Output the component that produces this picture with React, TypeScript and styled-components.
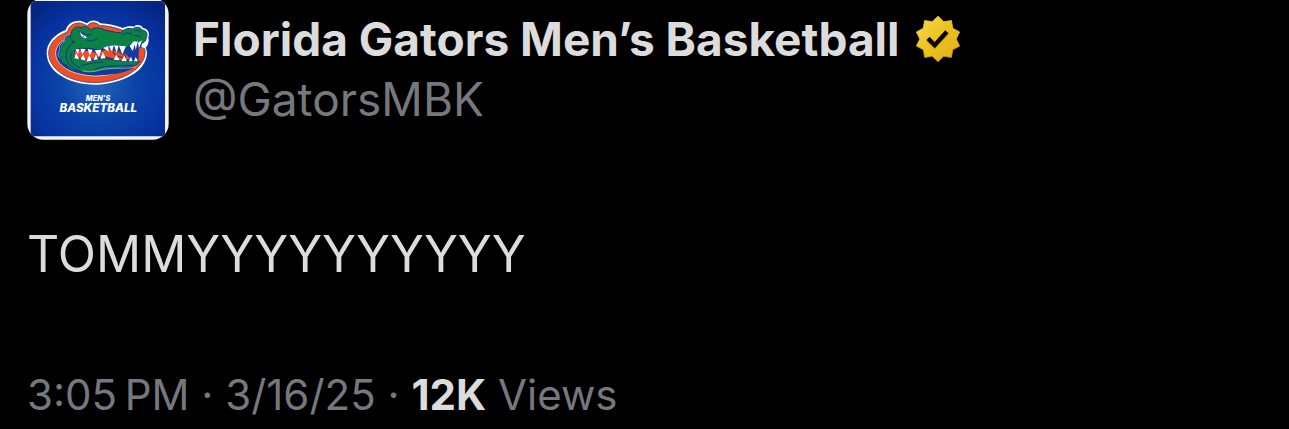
import React from 'react';
import styled, { createGlobalStyle } from 'styled-components';

const GlobalStyle = createGlobalStyle`
  * {
    box-sizing: border-box;
  }

  body {
    margin: 0;
    background: #000;
    color: #dcdcdc;
    font-family: Inter, 'Liberation Sans', sans-serif;
  }
`;

const Post = styled.article`
  padding: 0 27px 8px;
`;

const Header = styled.header`
  display: flex;
  align-items: flex-start;
  gap: 24px;
`;

const AvatarImage = styled.svg`
  display: block;
  flex: none;
  width: 142px;
  height: 140px;
`;

const Author = styled.div`
  min-width: 0;
  padding-top: 9px;
`;

const NameRow = styled.div`
  display: flex;
  align-items: center;
  gap: 16px;
`;

const Name = styled.h1`
  margin: 0;
  font-size: 46px;
  font-weight: 700;
  line-height: 60px;
`;

const Badge = styled.svg`
  display: block;
  flex: none;
  width: 44px;
  height: 46px;
`;

const Handle = styled.p`
  margin: 0;
  color: #75787d;
  font-size: 46px;
  line-height: 60px;
`;

const Body = styled.p`
  margin: 84px 0;
  font-size: 50px;
  line-height: 60px;
  overflow-wrap: anywhere;
`;

const Meta = styled.p`
  margin: 0;
  color: #75787d;
  font-size: 42px;
  line-height: 54px;
`;

const Count = styled.strong`
  color: #dcdcdc;
  font-weight: 700;
`;

function Avatar() {
  return (
    <AvatarImage viewBox="21 0 426 420" role="img" aria-label="Florida Gators Men's Basketball logo">
      <defs>
        <radialGradient id="court" cx="0.5" cy="0.6" r="0.7">
          <stop offset="0" stopColor="#2565b8" />
          <stop offset="0.4" stopColor="#0b44a8" />
          <stop offset="0.75" stopColor="#0732a0" />
          <stop offset="1" stopColor="#062582" />
        </radialGradient>
        <clipPath id="frame">
          <rect x="22" y="-6" width="424" height="425" rx="48" />
        </clipPath>
      </defs>
      <g clipPath="url(#frame)">
        <rect x="21" y="-6" width="426" height="426" fill="#f3f5fa" />
        <rect x="32" y="3" width="403" height="406" rx="6" fill="url(#court)" />
      </g>
      {/* ring */}
      <path
        d="M80 162C78 131 103 102 137 90C142 74 156 62 174 63C184 61 192 67 201 70C211 59 229 58 241 70C264 71 288 77 309 84C320 78 332 78 343 80C350 72 364 75 369 84C385 86 390 101 385 112C388 124 385 135 377 143C385 158 380 179 369 195C352 223 299 251 229 254C151 255 83 219 80 162Z"
        fill="#fff"
      />
      <path
        d="M86 162C84 135 108 107 142 96C146 80 158 69 174 69C184 67 192 74 202 77C212 65 228 65 238 76C264 77 287 83 307 90L355 140L374 146C378 160 374 177 363 191C346 217 298 245 229 248C156 249 89 214 86 162Z"
        fill="#f04e23"
        stroke="#10358f"
        strokeWidth="2"
      />
      <path
        d="M107 163C106 145 116 128 136 118L153 102L184 86L216 94L290 97L360 130L359 160C357 172 348 185 335 195C310 216 270 227 226 228C162 226 111 202 107 163Z"
        fill="#123a9c"
        stroke="#fff"
        strokeWidth="2"
      />
      {/* scales behind the jaw */}
      <path
        d="M151 106C138 106 132 116 134 127C122 130 117 141 122 150C113 157 114 169 122 174C120 185 128 193 138 194C141 204 153 210 165 211L180 186L160 130Z"
        fill="#0b8144"
        stroke="#123a9c"
        strokeWidth="4"
      />
      <path
        d="M150 104C137 105 131 115 133 126C120 130 116 141 120 150C111 158 113 169 121 175"
        fill="none"
        stroke="#b9cce9"
        strokeWidth="2"
      />
      {/* head and lower jaw */}
      <path
        d="M153 102C156 86 168 76 183 83C193 77 206 81 212 90C226 79 244 84 258 91C276 94 288 98 302 98C311 87 325 83 339 87C347 79 362 80 366 90C380 91 384 102 379 111C379 123 371 131 359 130L339 132L318 143L290 137L262 139L238 151L208 145L178 145L165 149L162 170L183 179L207 184L232 178L259 176L294 181L321 184L359 184C354 196 332 201 313 203C288 206 278 214 255 216C229 222 201 224 180 214C150 203 134 182 139 158C142 143 151 132 164 126C151 121 149 112 153 102Z"
        fill="#0b8144"
        stroke="#10358f"
        strokeWidth="3"
      />
      {/* mouth */}
      <path
        d="M165 150L184 146L209 149L235 155L263 143L287 140L316 147L339 134L366 125L360 181L324 184L297 181L257 174L233 175L208 184L180 177L161 169Z"
        fill="#143aa0"
      />
      <path
        d="M165 153L181 151L207 154L233 160L260 148L292 151L320 164L331 177L300 180L260 170L230 171L205 180L177 172L163 168Z"
        fill="#f04e23"
      />
      <path d="M357 145L370 143C374 153 371 171 362 181L355 180Z" fill="#f04e23" />
      <path d="M271 151L291 153L316 167L316 175L291 168Z" fill="#f04e23" stroke="#10358f" strokeWidth="3" />
      {/* teeth */}
      <path
        d="M166 148L178 147L174 162ZM181 146L197 147L187 163ZM203 147L218 150L209 166ZM224 151L244 149L237 171ZM249 144L265 137L266 154ZM267 138L281 136L276 157ZM282 136L296 137L290 158ZM297 137L318 139L307 163ZM329 138L340 125L348 123L338 153ZM344 130L354 122L347 150ZM354 129L366 121L357 145Z"
        fill="#fff"
      />
      <path
        d="M163 175L168 159L178 178ZM181 178L190 164L197 182ZM199 185L208 165L215 182ZM220 180L228 164L234 178ZM241 176L249 157L257 175ZM281 179L289 164L299 181ZM304 183L313 167L321 184ZM326 184L333 170L338 184ZM342 184L347 171L354 184Z"
        fill="#fff"
      />
      {/* eye and brow */}
      <path d="M180 94C179 109 188 118 203 115L197 107L187 103Z" fill="#fff" stroke="#10358f" strokeWidth="2" />
      <circle cx="190" cy="109" r="2" fill="#10358f" />
      <path
        d="M187 97L199 105L214 104M202 121C212 125 222 122 231 117M307 104C317 97 328 98 337 103M344 93C352 88 360 91 362 98M345 107L361 109M154 159C146 177 158 197 179 203M184 196C209 192 224 186 247 187M226 207C254 195 287 199 337 195"
        fill="none"
        stroke="#10358f"
        strokeWidth="3"
        strokeLinecap="round"
      />
      <path d="M190 213C216 222 238 209 256 207C286 205 319 202 348 202C320 216 288 226 235 225C215 225 202 220 190 213Z" fill="#123a9c" />
      <path d="M188 212C215 221 239 209 256 207C286 203 319 207 349 202" fill="none" stroke="#b9cce9" strokeWidth="2" />
      <g fill="#fff" fontFamily="Inter, 'Open Sans', sans-serif" fontWeight="800" fontStyle="italic" textAnchor="middle">
        <text x="234" y="304" fontSize="22">MEN'S</text>
        <text x="235" y="335" fontSize="35">BASKETBALL</text>
      </g>
    </AvatarImage>
  );
}

function VerifiedBadge() {
  return (
    <Badge viewBox="2 1.5 18 19" role="img" aria-label="Verified organization">
      <defs>
        <linearGradient id="gold" x1="0" y1="0" x2="1" y2="1">
          <stop offset="0" stopColor="#f7dc52" />
          <stop offset="0.5" stopColor="#eac11e" />
          <stop offset="1" stopColor="#e0b016" />
        </linearGradient>
        <linearGradient id="rim" x1="0" y1="0" x2="0" y2="1">
          <stop offset="0" stopColor="#f2d64b" />
          <stop offset="1" stopColor="#c98508" />
        </linearGradient>
      </defs>
      <path
        d="M13.324 3.848L11 1.6 8.676 3.848l-3.201-.453-.559 3.184L2.06 8.095 3.48 11l-1.42 2.904 2.856 1.516.559 3.184 3.201-.452L11 20.4l2.324-2.248 3.201.452.559-3.184 2.856-1.516L18.52 11l1.42-2.905-2.856-1.516-.559-3.184z"
        fill="url(#gold)"
        stroke="url(#rim)"
        strokeWidth="0.35"
      />
      <path
        d="M6.234 11.923l3.428 3.428 5.683-6.206-1.347-1.247-4.4 4.795-2.072-2.072z"
        fill="#d89a10"
      />
      <path
        d="M6.234 11.423l3.428 3.428 5.683-6.206-1.347-1.247-4.4 4.795-2.072-2.072z"
        fill="#090600"
      />
    </Badge>
  );
}

export default function App() {
  return (
    <>
      <GlobalStyle />
      <Post>
        <Header>
          <Avatar />
          <Author>
            <NameRow>
              <Name>Florida Gators Men’s Basketball</Name>
              <VerifiedBadge />
            </NameRow>
            <Handle>@GatorsMBK</Handle>
          </Author>
        </Header>
        <Body>TOMMYYYYYYYYYY</Body>
        <Meta>
          <time dateTime="2025-03-16T15:05">3:05{'\u2009'}PM · 3/16/25</time> · <Count>12K</Count> Views
        </Meta>
      </Post>
    </>
  );
}
